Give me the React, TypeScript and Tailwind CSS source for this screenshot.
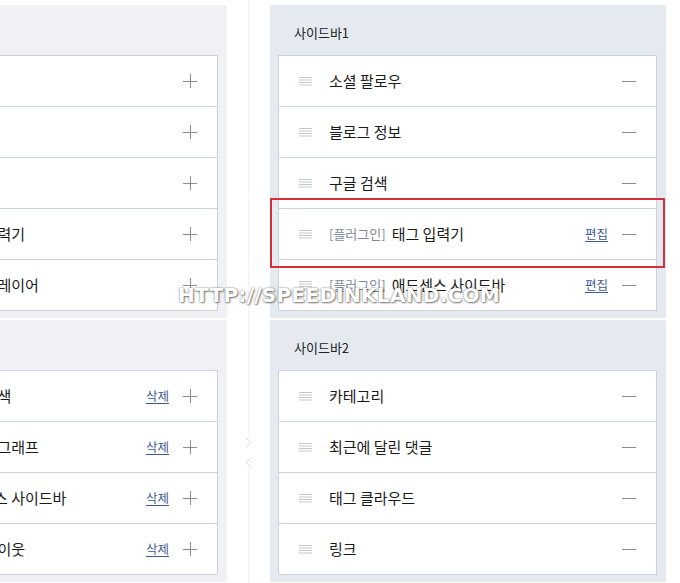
import React from "react";

type Item = { plugin?: boolean; name: string; edit?: string };

const font = { fontFamily: '"Noto Sans CJK KR", "Noto Sans", sans-serif' };

function DragIcon() {
  return (
    <svg width="13" height="10" viewBox="0 0 13 10" className="shrink-0">
      <g stroke="#c3c8d0" strokeWidth="1">
        <line x1="0" y1="1.5" x2="13" y2="1.5" />
        <line x1="0" y1="4" x2="13" y2="4" />
        <line x1="0" y1="6.5" x2="13" y2="6.5" />
        <line x1="0" y1="9" x2="13" y2="9" />
      </g>
    </svg>
  );
}

function PlusIcon() {
  return (
    <svg width="14" height="14" viewBox="0 0 14 14" className="shrink-0">
      <g stroke="#8a8d92" strokeWidth="1">
        <line x1="0" y1="7.5" x2="14" y2="7.5" />
        <line x1="7.5" y1="0" x2="7.5" y2="14" />
      </g>
    </svg>
  );
}

function MinusIcon() {
  return (
    <svg width="14" height="14" viewBox="0 0 14 14" className="shrink-0">
      <line x1="0" y1="7.5" x2="14" y2="7.5" stroke="#8a8d92" strokeWidth="1" />
    </svg>
  );
}

function Row({ item, first, mode }: { item: Item; first: boolean; mode: "add" | "remove" }) {
  return (
    <div
      className={`flex items-center bg-white ${first ? "h-[50px]" : "h-[51px] border-t border-[#cdd2da]"}`}
    >
      <div className="w-[50px] pl-[20px] flex items-center">
        <DragIcon />
      </div>
      <div className="flex-1 flex items-center whitespace-nowrap text-[15px] text-[#1a1a1a]">
        {item.plugin && <span className="text-[13px] text-[#808a9b] mr-[6px]">[플러그인]</span>}
        <span>{item.name}</span>
      </div>
      {item.edit && (
        <span className="text-[12.5px] text-[#3e5a90] underline underline-offset-2 mr-[14px]">{item.edit}</span>
      )}
      <div className="mr-[20px] flex items-center">{mode === "add" ? <PlusIcon /> : <MinusIcon />}</div>
    </div>
  );
}

function Panel({
  title,
  items,
  mode,
  bg,
}: {
  title: string;
  items: Item[];
  mode: "add" | "remove";
  bg: string;
}) {
  return (
    <div className={`w-[396px] rounded-[2px] ${bg} pl-[8px] pr-[9px] pb-[7px]`}>
      <div className="h-[50px] pl-[16px] pt-[6px] flex items-center text-[13px] text-[#222]">{title}</div>
      <div className="border border-[#cdd2da]">
        {items.map((it, i) => (
          <Row key={i} item={it} first={i === 0} mode={mode} />
        ))}
      </div>
    </div>
  );
}

export default function App() {
  const leftA: Item[] = [
    { name: "공지사항" },
    { name: "최근에 올라온 글" },
    { name: "글 보관함" },
    { plugin: true, name: "태그 입력기" },
    { plugin: true, name: "음악 플레이어" },
  ];
  const leftB: Item[] = [
    { plugin: true, name: "구글 검색", edit: "삭제" },
    { plugin: true, name: "방문자 그래프", edit: "삭제" },
    { plugin: true, name: "애드센스 사이드바", edit: "삭제" },
    { plugin: true, name: "블로그 이웃", edit: "삭제" },
  ];
  const right1: Item[] = [
    { name: "소셜 팔로우" },
    { name: "블로그 정보" },
    { name: "구글 검색" },
    { plugin: true, name: "태그 입력기", edit: "편집" },
    { plugin: true, name: "애드센스 사이드바", edit: "편집" },
  ];
  const right2: Item[] = [
    { name: "카테고리" },
    { name: "최근에 달린 댓글" },
    { name: "태그 클라우드" },
    { name: "링크" },
  ];

  return (
    <div className="relative w-[680px] h-[583px] overflow-hidden bg-white flex" style={font}>
      {/* left column (scrolled) */}
      <div className="w-[227px] shrink-0 overflow-hidden pt-[5px]">
        <div className="ml-[-169px] flex flex-col gap-[2px]">
          <Panel title="기본 모듈" items={leftA} mode="add" bg="bg-[#eff1f5]" />
          <Panel title="플러그인" items={leftB} mode="add" bg="bg-[#eff1f5]" />
        </div>
      </div>

      {/* middle divider */}
      <div className="w-[43px] shrink-0 flex flex-col items-center">
        <div className="h-[436px] w-px bg-[#f1f2f4]" />
        <div className="flex flex-col items-center gap-[9px] py-[1px]">
          <svg width="7" height="11" viewBox="0 0 7 11">
            <polyline points="0.5,0.5 6,5.5 0.5,10.5" fill="none" stroke="#d3d6db" strokeWidth="1" />
          </svg>
          <svg width="7" height="11" viewBox="0 0 7 11">
            <polyline points="6.5,0.5 1,5.5 6.5,10.5" fill="none" stroke="#d3d6db" strokeWidth="1" />
          </svg>
        </div>
        <div className="flex-1 w-px bg-[#f1f2f4]" />
      </div>

      {/* right column */}
      <div className="pt-[5px] flex flex-col gap-[2px]">
        <Panel title="사이드바1" items={right1} mode="remove" bg="bg-[#e5eaf1]" />
        <Panel title="사이드바2" items={right2} mode="remove" bg="bg-[#e5eaf1]" />
      </div>

      {/* highlight box */}
      <div className="absolute left-[270px] top-[198px] w-[395px] h-[70px] border-2 border-[#d4303c]" />

      {/* watermark */}
      <div
        className="absolute left-[178px] top-[280px] text-[20px] font-bold text-white whitespace-nowrap tracking-[0.3px]"
        style={{
          fontFamily: '"DejaVu Sans", sans-serif',
          textShadow: "0 0 2px rgba(0,0,0,0.55), 1px 1px 2px rgba(0,0,0,0.45)",
        }}
      >
        HTTP://SPEEDINKLAND.COM
      </div>
    </div>
  );
}
